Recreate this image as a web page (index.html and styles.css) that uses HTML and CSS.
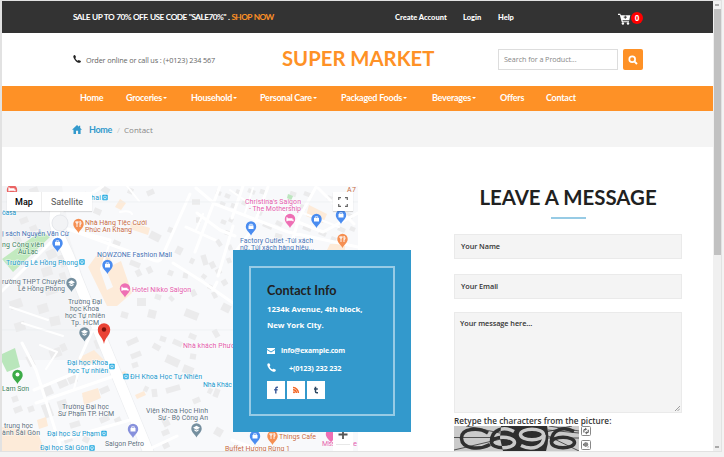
FILE: index.html
```html
<!DOCTYPE html>
<html lang="en">
<head>
<meta charset="utf-8">
<title>Super Market - Contact</title>
<link rel="stylesheet" href="styles.css">
</head>
<body>
<div class="window">
<main class="page">
  <div class="topbar">
    <p class="offer">SALE UP TO 70% OFF. USE CODE "SALE70%" . <a class="shop">SHOP NOW</a></p>
    <div class="account"><a class="create">Create Account</a><a class="login">Login</a><a>Help</a></div>
    <div class="cart">
      <svg width="13" height="12" viewBox="0 0 13 12"><path d="M0 .8h2.300l.5 1.400h9.500l-1 5H4.500l.3 1H11v1H3.800L1.800 1.900H0z" fill="#fff"/><path d="M7.300 2.600v3.200M5.700 4.200h3.200" stroke="#333" stroke-width=".9"/><circle cx="4.900" cy="10.500" r="1.200" fill="#fff"/><circle cx="10" cy="10.500" r="1.200" fill="#fff"/></svg>
      <span class="count">0</span>
    </div>
  </div>
  <header class="header">
    <div class="call"><svg width="8" height="8" viewBox="0 0 16 16"><path d="M1 1.500C2.500-.2 4-.2 4.800 1.500l1 2.200c.5 1.200-1.300 1.700-1 2.800.7 2 2.500 4 4.500 4.800 1.200.4 1.700-1.500 2.900-1l2.600 1.300c1.700.8 1 2.400-.3 3.400-2 1.500-5.500.2-8.700-2.700C2.300 9.200-.5 4 1 1.500z" fill="#212121"/></svg><span>Order online or call us : (+0123) 234 567</span></div>
    <h1 class="brand">SUPER MARKET</h1>
    <div class="search"><span class="field">Search for a Product...</span><span class="go"><svg width="10" height="10" viewBox="0 0 10 10"><circle cx="4.200" cy="4.200" r="2.900" fill="none" stroke="#fff" stroke-width="1.700"/><path d="M6.300 6.300L9 9" stroke="#fff" stroke-width="1.900"/></svg></span></div>
  </header>
  <nav class="nav">
    <a class="w-home">Home</a><a class="w-groc drop">Groceries</a><a class="w-house drop">Household</a><a class="w-care drop">Personal Care</a><a class="w-food drop">Packaged Foods</a><a class="w-bev drop">Beverages</a><a class="w-offer">Offers</a><a>Contact</a>
  </nav>
  <div class="crumbs"><svg width="10" height="9" viewBox="0 0 10 9"><path d="M5 0l2 1.800V.8h1.200v2.100L10 4.800H8.600V9H6.100V5.800H4V9H1.500V4.800H0z" fill="#3399cc"/></svg><a>Home</a><i>/</i><span>Contact</span></div>
  <section class="content">
    <div class="mapbox">
      <svg class="map" viewBox="2 186 356 265" width="356" height="265">
        <defs>
          <g id="pin"><path d="M0 9C-1.500 5.500-5.200 4-5.200 0a5.200 5.200 0 0 1 10.400 0C5.200 4 1.500 5.500 0 9z"/></g>
          <g id="bag" fill="#fff"><path d="M-2.500-1h5v3.500h-5z"/><path d="M-1.300-1v-1.200h2.600V-1" fill="none" stroke="#fff" stroke-width=".8"/></g>
          <g id="fork" stroke="#fff" stroke-width=".9" fill="none"><path d="M-1.500-2.800V3M-2.500-2.800v1.800h2v-1.800M1.500 3v-5.800q1.300 1 1 3h-1"/></g>
          <g id="bed"><path d="M-3-1.800v4M-3 1.200h6v1M-2.500-.1h5" fill="none" stroke="#fff" stroke-width="1.200"/></g>
          <g id="cap" fill="#fff"><path d="M0-2.700L3.500-.8 0 1.200-3.500-.8z"/><path d="M-2 .7l2 1.200 2-1.200v1.500l-2 1-2-1z"/></g>
          <g id="stop"><rect x="-2.700" y="-2.700" width="5.400" height="5.400" rx=".7" fill="#1ba7df"/><path d="M-1.200-1.300h2.400v2.200h-2.400zM-1 2.100l.6-1M1 2.100l-.6-1" fill="none" stroke="#fff" stroke-width=".7"/></g>
        </defs>
        <rect x="2" y="186" width="356" height="265" fill="#f8f9fb"/>
        <path d="M2 186H62L70 240 112 360 2 360z" fill="#f3f4f6"/>
        <g fill="none" stroke="#ebebec">
          <path stroke-width="5.500" d="M147 194l7-3M192 202l8 0M196 220l5 0M168 229l5 2M190 260l4 2M203 255l3 10M211 262l3 6M217 269l3 5M130 262l10 4M137 270l3 6M148 267l3 6M168 272l5 2M183 275l5 1M192 290l3 6M155 296l6 2M170 300l3-3M223 280l3 5M127 344l11-5M131 357l10-4M132 366l6-2M153 345l7 4M160 338l6 2M173 341l9 4M189 335l7 3M214 330l4 7M190 356l6 1M144 388l4 2M154 389l1 8M166 391l14-4M193 402l7-3M208 390l4 2M215 397l3-8M162 434l7-3M163 447l6-3"/>
          <path stroke-width="8" d="M150 234l10 5M176 249l6 3M137 302l9 0M185 312l13 5M222 306l8 4M166 358l13 6M183 368l10 4M163 424l6-3M215 430l7 4M148 313l8 2"/>
          <path stroke-width="9" d="M47 256l9-4M61 255l5 11M42 273l10-3M60 278l6-2M45 292l12-4M38 310l10-3M50 322l10-2M50 355l11-4M45 384l5 11M58 385l9-4M45 404l5 13M58 406l9-3M84 400l12-5M95 345l8-3M70 374l4 9M14 240l6-3M10 306l12-4M15 328l10-3"/>
          <path stroke-width="6" d="M84 194l7 4M94 210l7 3M102 188l7 4M128 190l5 2M30 192l8-3M20 222l8-3M30 230l7-3M100 392l9-4M100 421l9-4M70 426l10-3M64 441l8-3M83 438l6 3M115 422l6-3M62 344l3 7M83 362l6-3M28 356l5 10M12 400l6-2M14 411l8-3M28 410l6-2M112 300l5-2M121 314l7 2M113 242l7 3"/>
          <path stroke-width="4.500" d="M216 192l5 2M225 195l5 2M236 191l5 2M220 203l5 2M231 205l6 2M242 202l4 2M221 221l5 2M229 219l4 2M225 232l6 2M217 240l4 6M229 245l2 5M228 258l2 5M248 190l7 3M260 191l6 2M267 201l5 2M257 212l5 2M263 224l9 4M276 222l6 3M275 235l7 2M290 193l6 2M304 193l8 3M300 206l6 2M303 227l8 3M319 232l7 3M327 197l5 2M334 204l6 2M338 228l7 3M350 228l5 2M331 238l5 2M346 214l7 3M213 292l3 6M202 275l4 3M208 286l4 2"/>
        </g>
        <g fill="#fdebd9"><path d="M88 267l8-11q8-4 13 0l4 9 8-4 11 32-15 13h-10zM115 207l5-8 6 4-5 7zM131 222l19 6-2 7-18-6zM309 205l18 9-4 9-17-7zM78 358l16-8 10 10-18 5zM82 393l16-5 3 10-17 7zM111 376l14-5 3 5-14 5zM135 395l9-4 2 4-9 4zM2 427l35 4 8 20H2zM37 420l9-3 2 9-9 3zM330 244h15v6h-18z"/></g>
        <path d="M100 270l5-3 8 20-6 3z" fill="#f8f9fb"/>
        <path d="M2 259l39-28 9 6-37 35z" fill="#c2eabf"/><path d="M2 354l13-6 5 19-13 5-5-10z" fill="#b9e6bb"/><path d="M288 194l5 2-2 5-4-3z" fill="#bce6bf"/>
        <path d="M57 206C48 230 66 240 76 276L104 344 150 456" fill="none" stroke="#e9ebee" stroke-width="11.500"/>
        <g fill="none" stroke="#fff" stroke-linecap="round" stroke-linejoin="round">
          <path d="M57 206C48 230 66 240 76 276L104 344 150 456" stroke-width="10.500"/>
          <path d="M62 211L91 194 103 186M2 291L54 239M68 229L110 240M22 343L36 370 60 445M36 403L120 374M34 390L97 364M60 440L130 420M190 194L162 257Q160 263 153 260L68 229M173 263L203 282 233 303M220 186L195 252M233 226L218 276M197 213L220 230 235 236M186 227L215 240M196 188L215 204 288 232 358 247M268 187L252 230 236 251M316 187L299 218 291 245M243 186L232 218M288 218L323 232 358 213M318 188L354 224M217 282L213 290M145 451L177 436M232 440L262 451M104 344L93 329 80 358" stroke-width="3"/>
          <path d="M127 186L139 201M120 212q10-2 12 2M203 214L196 230M230 190L259 210M253 188L245 213M278 208L296 223M303 213L339 227M40 345l17 7-11 17M80 365l-6 24M22 323l41 13M10 307l38 13M110 242l-9 27" stroke-width="2"/>
        </g>
        <path d="M2 202H358M2 330H233" stroke="#eaedf0" stroke-width=".6"/>
        <circle cx="60" cy="223" r="8" fill="#f2f3f5" stroke="#e6e8ec"/>
        <g fill="#4a8cf0"><use href="#pin" x="57.500" y="243"/><use href="#pin" x="107.500" y="265"/><use href="#pin" x="251" y="226.500"/><use href="#pin" x="316.500" y="219"/><use href="#pin" x="341" y="215"/><use href="#pin" x="255" y="436"/></g>
        <g fill="#f58f52"><use href="#pin" x="78.500" y="224"/><use href="#pin" x="342.500" y="239"/><use href="#pin" x="272.500" y="436"/></g>
        <g fill="#ee6fb4"><use href="#pin" x="125" y="288.500"/><use href="#pin" x="290" y="219"/><use href="#pin" x="331" y="434"/></g>
        <g fill="#758f9f"><use href="#pin" x="71.500" y="283"/><use href="#pin" x="84.500" y="332.500"/><use href="#pin" x="196.500" y="428.500"/></g>
        <use href="#pin" x="12" y="190" fill="#ea6464"/><use href="#pin" x="17.500" y="375" fill="#3cab48"/><use href="#pin" x="133" y="429" fill="#8791dc"/>
        <use href="#bag" x="57.500" y="243"/><use href="#bag" x="107.500" y="265"/><use href="#bag" x="251" y="226.500"/><use href="#bag" x="316.500" y="219"/><use href="#bag" x="341" y="215"/><use href="#bag" x="133" y="429"/><use href="#bag" x="255" y="436"/>
        <use href="#fork" x="78.500" y="224"/><use href="#fork" x="342.500" y="239"/><use href="#fork" x="272.500" y="436"/><use href="#bed" x="125" y="288.500"/><use href="#bed" x="290" y="219"/><use href="#bed" x="12" y="189"/>
        <use href="#cap" x="71.500" y="283"/><use href="#cap" x="84.500" y="332.500"/><use href="#cap" x="196.500" y="428.500"/><circle cx="17.500" cy="374.500" r="2" fill="#fff"/>
        <use href="#stop" x="105" y="197.500"/><use href="#stop" x="82" y="262"/><use href="#stop" x="112" y="366.500"/><use href="#stop" x="126" y="376.500"/><use href="#stop" x="104" y="433.500"/><use href="#stop" x="92" y="448"/>
        <path d="M104 344C103 337 97.800 336 97.800 329.500a6.200 6.200 0 0 1 12.400 0C110.200 336 105 337 104 344z" fill="#ea4335"/><circle cx="104" cy="329.500" r="2.200" fill="#7c130d"/>
        <g class="label orange"><text x="85" y="225" textLength="62">Nhà Hàng Tiệc Cưới</text><text x="85" y="232" textLength="47">Phúc An Khang</text><text x="279" y="438.500" textLength="37">Things Cafe</text><text x="225" y="450.500" textLength="65">Buffet Hương Rừng 1</text><text x="347" y="191.500" textLength="9">A 7</text></g>
        <g class="label blue"><text x="2" y="235.500" textLength="67">ị sách Nguyễn Văn Cừ</text><text x="97" y="257" textLength="75">NOWZONE Fashion Mall</text><text x="240" y="243" textLength="73">Factory Outlet -Túi xách</text><text x="240" y="249.500" textLength="74">nữ, Túi xách hàng hiệu...</text></g>
        <g class="label green"><text x="2" y="247" textLength="42">ng Công viên</text><text x="18" y="254" textLength="20">Âu Lạc</text><text x="2" y="390.500" textLength="27">Lam Sơn</text></g>
        <g class="label cyan"><text x="91" y="200" textLength="10">hai</text><text x="2" y="214.500" textLength="14">òasa</text><text x="6" y="264.500" textLength="72">Trường Lê Hồng Phong</text><text x="67" y="365" textLength="41">Đại học Khoa</text><text x="68" y="372.500" textLength="40">học Tự nhiên</text><text x="130" y="378.500" textLength="72">ĐH Khoa Học Tự Nhiên</text><text x="203" y="386.500" textLength="29">Nhà Khác</text><text x="47" y="436" textLength="53">Đại học Sư Phạm</text><text x="40" y="450" textLength="48">Đại học Sài Gòn</text></g>
        <g class="label pink"><text x="132" y="292" textLength="59">Hotel Nikko Saigon</text><text x="245" y="204" textLength="56">Christina's Saigon</text><text x="249" y="211" textLength="52">- The Mothership</text><text x="183" y="347.500" textLength="52">Nhà khách Phươ</text><text x="322" y="446" textLength="35">Miss Saigone</text></g>
        <g class="label grey"><text x="2" y="283.500" textLength="63">rường THPT Chuyên</text><text x="18" y="290.500" textLength="47">Lê Hồng Phong</text><text x="68" y="303.500" textLength="34">Trường Đại</text><text x="70" y="310.500" textLength="29">học Khoa</text><text x="65" y="317.500" textLength="40">học Tự nhiên</text><text x="71" y="324.500" textLength="28">Tp. HCM</text><text x="62" y="408.500" textLength="47">Trường Đại học</text><text x="58" y="415.500" textLength="56">Sư Phạm TP. HCM</text><text x="146" y="413" textLength="62">Viện Khoa Học Hình</text><text x="158" y="420" textLength="50">Sự - Bộ Công An</text><text x="4" y="427.500" textLength="29">trung học</text><text x="2" y="434.500" textLength="38">ành Sài Gòn</text><text x="105" y="445.500" textLength="39">Saigon Petro</text></g>
      </svg>
      <div class="maptype"><span class="on">Map</span><span>Satellite</span></div>
      <div class="full"><svg width="10" height="10" viewBox="0 0 10 10"><path d="M.7 3V.7H3M7 .7h2.300V3M9.300 7v2.300H7M3 9.300H.7V7" fill="none" stroke="#666" stroke-width="1.200"/></svg></div>
      <div class="plus"><svg width="20" height="19" viewBox="0 0 20 19"><path d="M5.500 2.500h9M10-2v9" stroke="#555" stroke-width="1.800"/><path d="M3 12.500h14" stroke="#e8e8e8"/></svg></div>
      <aside class="card"><div class="info">
        <h2>Contact Info</h2>
        <p class="addr">1234k Avenue, 4th block,<br>New York City.</p>
        <p class="line mail"><svg width="8" height="6" viewBox="0 0 8 6"><path d="M0 0h8v1L4 3.400 0 1zM0 2l4 2.400L8 2v4H0z" fill="#fff"/></svg><span>info@example.com</span></p>
        <p class="line tel"><svg width="9" height="9" viewBox="0 0 16 16"><path d="M1 1.500C2.500-.2 4-.2 4.800 1.500l1 2.200c.5 1.200-1.300 1.700-1 2.800.7 2 2.500 4 4.500 4.800 1.200.4 1.700-1.500 2.900-1l2.600 1.300c1.700.8 1 2.400-.3 3.400-2 1.500-5.500.2-8.700-2.700C2.300 9.200-.5 4 1 1.500z" fill="#fff"/></svg><span>+(0123) 232 232</span></p>
        <div class="social"><span><svg width="8" height="8" viewBox="0 0 8 8"><path d="M5.900 1.200H5q-1.200 0-1.200 1.300V7.500M2.200 3.700h3.400" fill="none" stroke="#3b5998" stroke-width="1.400"/></svg></span><span><svg width="8" height="8" viewBox="0 0 8 8"><circle cx="2" cy="6.200" r="1" fill="#f26522"/><path d="M1 3.700a3.300 3.300 0 0 1 3.300 3.300M1 1.600A5.400 5.400 0 0 1 6.400 7" fill="none" stroke="#f26522" stroke-width="1.500"/></svg></span><span><svg width="8" height="8" viewBox="0 0 8 8"><path d="M3.500.7v4.800q0 1.300 1.300 1.300H6M2 2.900h3.800" fill="none" stroke="#2c4762" stroke-width="1.500"/></svg></span></div>
      </div></aside>
    </div>
    <form class="form">
      <h2 class="title">LEAVE A MESSAGE</h2>
      <div class="rule"></div>
      <div class="input name">Your Name</div>
      <div class="input email">Your Email</div>
      <div class="message">Your message here...<svg class="grip" width="5" height="5" viewBox="0 0 5 5"><path d="M0 5L5 0M2.500 5L5 2.500" stroke="#888" stroke-width=".8"/></svg></div>
      <p class="retype">Retype the characters from the picture:</p>
      <div class="captcha">
        <svg width="125" height="25" viewBox="0 0 125 25">
          <defs>
            <g id="curl"><path d="M24 5.500C14 0 1 3 1.500 16"/><ellipse cx="13" cy="16.500" rx="11.500" ry="5.300"/></g>
            <clipPath id="band"><path d="M47 0H93Q96 12 92 25H49L46 12z"/></clipPath>
          </defs>
          <rect width="125" height="25" fill="#cacaca"/>
          <path d="M0 11.500H45M12 0L46 7M0 24L47 13M95 0L125 5M92 9L125 25M92 6L118 0M93 12h32M94 4l31 3" stroke="#333" stroke-width=".8"/>
          <path d="M47 0H93Q96 12 92 25H49L46 12z" fill="#2e2e2e"/>
          <g fill="none" stroke="#303030" stroke-width="3.500"><path d="M34 7C25 1 7 2 7.500 12.500C8 23 25 24.500 36 18.500"/><use href="#curl" x="36"/><use href="#curl" x="96"/></g>
          <g fill="none" stroke="#cacaca" stroke-width="3.500" clip-path="url(#band)"><use href="#curl" x="36"/><path d="M67 19.500C78 25 91 21 90 9"/><ellipse cx="78" cy="8.500" rx="11.500" ry="5.300"/></g>
        </svg>
        <div class="tools"><svg width="10" height="10" viewBox="0 0 10 10"><rect x=".5" y=".5" width="9" height="9" rx="1" fill="#fff" stroke="#888"/><path d="M2.900 6.500V4.300q0-1 1.200-1h.6M7.200 3.700v2q0 1-1.200 1h-.6" fill="none" stroke="#555" stroke-width="1.100"/><path d="M4.200 1.600L6 3.200 4.200 4.700zM5.800 5.300L4 6.800 5.800 8.400z" fill="#555"/></svg><svg width="10" height="10" viewBox="0 0 10 10"><rect x=".5" y=".5" width="9" height="9" rx="1" fill="#fff" stroke="#888"/><path d="M2 3.800h1.500L5 2v5L3.500 5.500H2z" fill="#555"/><circle cx="5" cy="4.500" r="2.300" fill="#888"/><path d="M6.500 7.500l1.500-1" stroke="#aaa"/></svg></div>
      </div>
    </form>
  </section>
</main>
<div class="scroll"><div class="arrow up"></div><div class="thumb"></div><div class="arrow down"></div></div>
</div>
</body>
</html>
```
FILE: styles.css
```css
* { box-sizing: border-box; }
body { margin: 0; width: 724px; height: 457px; overflow: hidden; background: #f3f3f3; font-family: "Open Sans", sans-serif; color: #212121; }
h1, h2, p { margin: 0; }
svg { display: block; flex: none; }
.window { display: flex; width: 722px; height: 452px; border: solid #e2e2e2; border-width: 1px 0 1px 2px; background: #fff; }
.page { width: 711px; height: 450px; overflow: hidden; flex: none; white-space: nowrap; }
.topbar { display: flex; height: 32px; background: #333; color: #fff; padding-left: 71px; font-family: Lato, sans-serif; font-weight: 700; }
.offer { width: 322px; font-size: 8.300px; line-height: 32px; letter-spacing: -.57px; word-spacing: .6px; }
.shop { color: #fe9126; }
.account { display: flex; width: 223px; font-size: 7.500px; font-weight: 900; line-height: 33px; }
.create { width: 68px; }
.login { width: 35px; }
.cart { display: flex; gap: 0; padding-top: 11px; }
.cart svg { margin-top: 1px; }
.count { width: 12px; height: 12px; border-radius: 50%; background: #f00; text-align: center; font: 700 8px/12px "Open Sans", sans-serif; }
.header { display: flex; height: 53px; padding-left: 71px; }
.call { display: flex; width: 209px; padding-top: 22px; gap: 5px; font-size: 7.300px; line-height: 11px; letter-spacing: -.15px; color: #666; }
.brand { width: 216px; font: 700 20.300px/51px Lato, sans-serif; color: #fe9126; }
.search { display: flex; gap: 5px; padding-top: 16px; }
.field { width: 120px; height: 21px; border: 1px solid #ddd; padding-left: 5px; font-size: 7.200px; line-height: 19px; letter-spacing: -.07px; color: #888; }
.go { width: 20px; height: 21px; border-radius: 2px; background: #fe9126; display: grid; place-items: center; }
.nav { display: flex; height: 25px; padding-left: 78px; background: #fe9126; color: #fff; font: 700 9px/24px Lato, sans-serif; letter-spacing: -.26px; }
.w-home { width: 46px; } .w-groc { width: 65px; } .w-house { width: 69px; } .w-care { width: 81px; } .w-food { width: 91px; } .w-bev { width: 68px; } .w-offer { width: 46px; }
.drop::after { content: ""; display: inline-block; margin-left: 1px; vertical-align: 2px; border: 2px solid transparent; border-top-color: #fff; border-bottom: 0; }
.crumbs { display: flex; height: 36px; align-items: center; padding-left: 70px; background: #f4f4f4; font-size: 8px; color: #888; }
.crumbs a { margin-left: 7px; font: 700 9px Lato, sans-serif; letter-spacing: -.3px; color: #3399cc; }
.crumbs i { margin: 0 4px 0 5px; font-style: normal; color: #ccc; }
.content { display: flex; height: 303px; }
.mapbox { position: relative; width: 452px; padding-top: 39px; }
.label { font: 400 7px Roboto, sans-serif; stroke: #fff; stroke-width: 1.200px; paint-order: stroke; stroke-opacity: .6; }
.orange { fill: #c56a43; } .blue { fill: #4672b5; } .green { fill: #3c8160; } .cyan { fill: #1998cd; } .pink { fill: #e45cac; } .grey { fill: #5c7180; }
.maptype { position: absolute; left: 5px; top: 45px; display: flex; height: 19px; background: #fff; box-shadow: 0 1px 1px rgba(0,0,0,.12); font: 400 9px/20px Roboto, sans-serif; color: #555; }
.maptype span { width: 50px; text-align: center; }
.maptype .on { width: 35px; color: #000; font-weight: 500; border-right: 1px solid #eee; }
.full { position: absolute; left: 331px; top: 45px; width: 20px; height: 19px; background: #fff; display: grid; place-items: center; box-shadow: 0 1px 1px rgba(0,0,0,.15); }
.plus { position: absolute; left: 331px; top: 285px; width: 20px; height: 19px; background: #fff; }
.card { position: absolute; left: 231px; top: 103px; width: 178px; height: 182px; padding: 16px; background: #3399cc; }
.info { height: 150px; border: 2px solid #97cbe5; padding: 14px 0 0 16px; color: #fff; font-weight: 700; }
.info h2 { font: 700 12.600px/18px Lato, sans-serif; color: #212121; }
.addr { font-size: 7.800px; line-height: 16px; margin-top: 1px; letter-spacing: -.04px; }
.line { display: flex; align-items: center; height: 17px; }
.mail { margin-top: 9px; gap: 6px; font-size: 7px; letter-spacing: -.18px; }
.tel { gap: 13px; font-size: 7.300px; letter-spacing: -.16px; }
.social { display: flex; gap: 2px; margin-top: 5px; }
.social span { width: 18px; height: 18px; background: #fff; display: grid; place-items: center; }
.form { width: 228px; }
.title { margin-top: 37px; text-align: center; font: 700 20.400px/26px Lato, sans-serif; }
.rule { width: 35px; height: 2px; margin: 7px auto 15px 97px; background: #97cbe5; }
.input { height: 25px; margin-bottom: 15px; border: 1px solid #eaeaea; background: #f4f4f4; padding-left: 6px; font-size: 7.300px; font-weight: 600; line-height: 23px; letter-spacing: -.07px; color: #333; }
.email { margin-bottom: 13px; }
.message { position: relative; height: 101px; border: 1px solid #eaeaea; background: #f4f4f4; padding: 4px 5px; font-size: 7.300px; font-weight: 600; line-height: 12px; letter-spacing: -.06px; color: #333; }
.grip { position: absolute; right: 1px; bottom: 1px; }
.retype { height: 13px; font-size: 8.200px; font-weight: 600; line-height: 16px; letter-spacing: .04px; color: #333; }
.captcha { display: flex; gap: 2px; }
.tools { display: grid; gap: 2px; }
.scroll { width: 9px; background: #f0f0f0; border-right: 1px solid #e2e2e2; display: flex; flex-direction: column; align-items: center; }
.arrow { height: 8px; display: grid; place-items: center; }
.arrow::after { content: ""; width: 4px; height: 2px; background: #aaa; }
.thumb { width: 7px; height: 246px; background: #c1c1c1; }
.down { margin-top: auto; }
```
